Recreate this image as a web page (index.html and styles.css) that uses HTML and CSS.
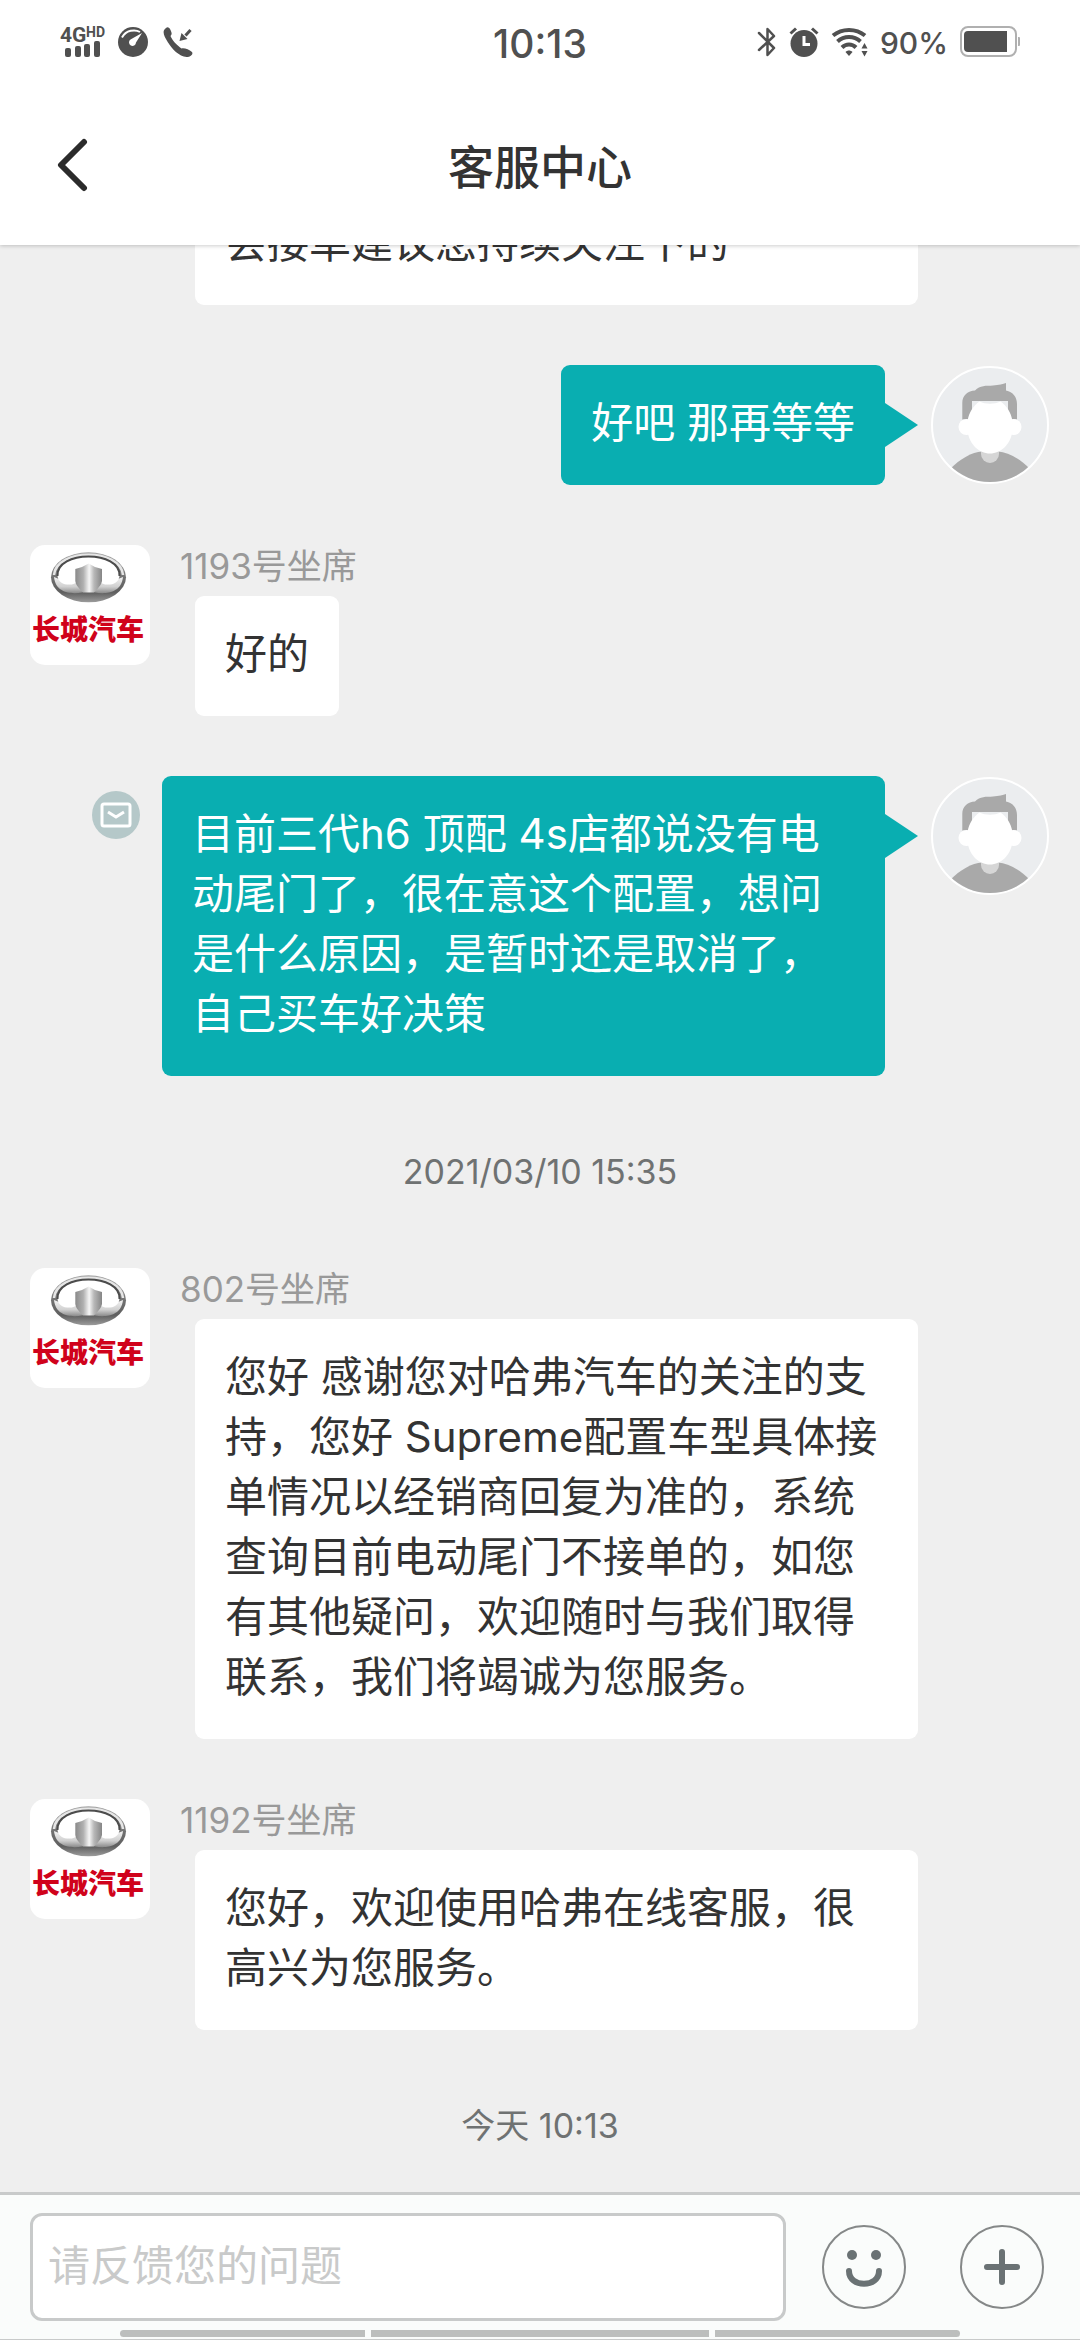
FILE: index.html
```html
<!DOCTYPE html>
<html lang="zh-CN">
<head>
<meta charset="utf-8">
<meta name="viewport" content="width=device-width, initial-scale=1">
<title>客服中心</title>
<link rel="stylesheet" href="styles.css">
</head>
<body>
<svg class="sprite" aria-hidden="true">
  <defs>
    <linearGradient id="ring" x1="0" y1="0" x2="0" y2="1">
      <stop offset="0" stop-color="#a5a5a5"/>
      <stop offset=".3" stop-color="#8a8a8a"/>
      <stop offset=".55" stop-color="#6d6d6d"/>
      <stop offset=".8" stop-color="#5f5f5f"/>
      <stop offset="1" stop-color="#9c9c9c"/>
    </linearGradient>
    <linearGradient id="swoosh" x1="0" y1="0" x2="0" y2="1">
      <stop offset="0" stop-color="#f2f2f2"/>
      <stop offset=".6" stop-color="#d0d0d0"/>
      <stop offset="1" stop-color="#8a8a8a"/>
    </linearGradient>
    <linearGradient id="tower" x1="0" y1="0" x2="1" y2="0">
      <stop offset="0" stop-color="#8a8a8a"/>
      <stop offset=".3" stop-color="#b0b0b0"/>
      <stop offset=".52" stop-color="#f6f6f6"/>
      <stop offset=".7" stop-color="#b8b8b8"/>
      <stop offset="1" stop-color="#858585"/>
    </linearGradient>
    <clipPath id="disc"><circle cx="60" cy="60" r="57"/></clipPath>
  </defs>
  <symbol id="user" viewBox="0 0 120 120">
    <circle cx="60" cy="60" r="58" fill="#ebedef" stroke="#fff" stroke-width="2"/>
    <g clip-path="url(#disc)">
      <path d="M20 104C30 94 42 87 52 86.500H68C78 87 90 94 100 104V120H20Z" fill="#a9a9a9"/>
    </g>
    <path d="M51 84H69V89a9 9 0 0 1-18 0Z" fill="#d6d6d6"/>
    <path d="M32.300 54.500V38C32.300 30 38 26 45 25.500C50 20 56 21 63 20.500C69 20 73 19 76 18V25.500C83 27 87 32 87 39V54.500H78V36H42V54.500Z" fill="#a9a9a9"/>
    <circle cx="36.500" cy="62" r="8" fill="#fff"/>
    <circle cx="83.500" cy="62" r="8" fill="#fff"/>
    <path d="M49.500 36.500C56 39.500 64 39.500 70.500 36.500C77 41 81 48 82.300 55V66C81 79 71 88.500 60 88.500S39 79 37.700 66V55C39 48 43 41 49.500 36.500Z" fill="#fff"/>
  </symbol>
  <symbol id="brand" viewBox="0 0 120 120">
    <ellipse cx="58.500" cy="32.300" rx="37.500" ry="25" fill="url(#ring)"/>
    <path d="M24 30C26 3 91 3 93 30" fill="none" stroke="#e6e6e6" stroke-width="2.500"/>
    <path d="M24 32C26 52 50 49 57 46H60C67 49 91 52 93 32L88 34H29Z" fill="url(#swoosh)"/>
    <path d="M27.500 29C29 6 88 6 89.500 29C90 35 86 39 80 39.500C75 40 72 39 69 36H48C45 39 42 40 37 39.500C31 39 27 35 27.500 29Z" fill="#fff"/>
    <path d="M27.500 31C26 5 91 5 89.500 31" fill="none" stroke="#4c4c4c" stroke-width="2"/>
    <path d="M45.300 24L52 22L58.700 18.500L65 22L72 24V36C71 41 67 44 64 47.500H53C50 44 46 41 45.300 36Z" fill="url(#tower)"/>
    <text x="58" y="95" text-anchor="middle" class="brand-name">长城汽车</text>
  </symbol>
</svg>

<div class="screen">
  <header class="top">
    <div class="status">
      <div class="status-left">
        <svg width="50" height="42" viewBox="0 -6 50 42" fill="currentColor" role="img" aria-label="4G HD">
          <text x="0" y="15" class="net">4G</text>
          <text x="26" y="10" class="net-hd">HD</text>
          <rect x="5" y="21" width="6" height="9" rx="2"/>
          <rect x="15" y="19" width="6" height="11" rx="2"/>
          <rect x="24" y="17" width="6" height="13" rx="2"/>
          <rect x="34" y="14" width="6" height="16" rx="2"/>
        </svg>
        <svg class="gap-a" width="30" height="30" viewBox="0 0 30 30" aria-hidden="true">
          <circle cx="15" cy="15" r="15" fill="currentColor"/>
          <path d="M4 10.500C8 3 17 2 22 5" fill="none" stroke="#fff" stroke-width="2"/>
          <path d="M24 6L18 15.500A3.500 3.500 0 1 1 12.500 12.500Z" fill="#fff"/>
        </svg>
        <svg class="gap-b" width="30" height="30" viewBox="0 0 30 30" fill="currentColor" aria-hidden="true">
          <path d="M3 1C4.500-.5 6.500.5 7.500 3S9.500 7 7.500 9C9 13 14 18.500 18.500 21.500C21 20.500 26 22.500 29 25C30.500 27 28 29.500 25 30C17 30.500 9 22 5 15.500C1 9-1.500 4 3 1Z"/>
          <path d="M27.500 3L22.500 8.500" stroke="currentColor" stroke-width="3"/>
          <path d="M16.500 14L18.500 6L24.500 12Z"/>
        </svg>
      </div>
      <time class="clock">10:13</time>
      <div class="status-right">
        <svg width="20" height="30" viewBox="0 0 20 30" fill="none" stroke="currentColor" stroke-width="2.500" stroke-linejoin="round" stroke-linecap="round" aria-hidden="true">
          <path d="M2 6L17 21L10.500 28V2L17 9L2 23"/>
        </svg>
        <svg width="30" height="30" viewBox="0 0 30 30" fill="currentColor" aria-hidden="true">
          <circle cx="15" cy="16.500" r="13.500"/>
          <path d="M1.500 6.500L7 1.500M28.500 6.500L23 1.500" stroke="currentColor" stroke-width="3"/>
          <path d="M15 9V17.500H21" fill="none" stroke="#fff" stroke-width="3"/>
        </svg>
        <svg width="37" height="30" viewBox="0 0 37 30" aria-hidden="true">
          <g fill="none" stroke="currentColor" stroke-width="4">
            <path d="M2 8.500C11 1 25 1 34 8.500"/>
            <path d="M6.500 14.500C13 8.500 23 8.500 29.500 14.500"/>
            <path d="M11 20.500C15 16.500 21 16.500 25 20.500"/>
          </g>
          <path d="M14.500 25C16.500 23 19.500 23 21.500 25L18 29Z" fill="currentColor"/>
          <path d="M30.500 21.500L33.500 16L36.500 21.500ZM30.500 24L33.500 29.500L36.500 24Z" fill="currentColor"/>
        </svg>
        <span class="percent">90%</span>
        <svg width="60" height="32" viewBox="0 0 60 32" aria-hidden="true">
          <rect x="1" y="1" width="55" height="29" rx="7" fill="none" stroke="#b0b0b0" stroke-width="2"/>
          <path d="M8 5H47V26H8A4 4 0 0 1 4 22V9A4 4 0 0 1 8 5Z" fill="currentColor"/>
          <path d="M58 11h1q1 0 1 1v7q0 1-1 1h-1Z" fill="#b0b0b0"/>
        </svg>
      </div>
    </div>
    <div class="appbar">
      <button class="back" type="button" aria-label="返回">
        <svg width="32" height="54" viewBox="0 0 32 54" fill="none" stroke="#2b2b2b" stroke-width="6" stroke-linecap="round" stroke-linejoin="round" aria-hidden="true"><path d="M27 4L4 27L27 50"/></svg>
      </button>
      <h1 class="title">客服中心</h1>
    </div>
  </header>

  <main class="chat">
    <div class="row row-continued">
      <p class="bubble bubble-full">会接单建议您持续关注下的</p>
    </div>

    <div class="row row-user">
      <p class="bubble">好吧 那再等等</p>
      <svg class="avatar" role="img" aria-label="我"><use href="#user"/></svg>
    </div>

    <div class="row">
      <svg class="avatar avatar-agent" role="img" aria-label="长城汽车"><use href="#brand"/></svg>
      <div class="body">
        <span class="name">1193号坐席</span>
        <p class="bubble">好的</p>
      </div>
    </div>

    <div class="row row-user">
      <svg class="mark" viewBox="0 0 48 48" aria-hidden="true">
        <circle cx="24" cy="24" r="24" fill="#b5c8c9"/>
        <rect x="10" y="13" width="28" height="22" rx="2" fill="none" stroke="#fff" stroke-width="3"/>
        <path d="M16 21L24 26L32 21" fill="none" stroke="#fff" stroke-width="3"/>
      </svg>
      <p class="bubble">目前三代h6 顶配 4s店都说没有电动尾门了，很在意这个配置，想问是什么原因，是暂时还是取消了，自己买车好决策</p>
      <svg class="avatar" role="img" aria-label="我"><use href="#user"/></svg>
    </div>

    <time class="stamp">2021/03/10 15:35</time>

    <div class="row">
      <svg class="avatar avatar-agent" role="img" aria-label="长城汽车"><use href="#brand"/></svg>
      <div class="body">
        <span class="name">802号坐席</span>
        <p class="bubble">您好 感谢您对哈弗汽车的关注的支持，您好 Supreme配置车型具体接单情况以经销商回复为准的，系统查询目前电动尾门不接单的，如您有其他疑问，欢迎随时与我们取得联系，我们将竭诚为您服务。</p>
      </div>
    </div>

    <div class="row">
      <svg class="avatar avatar-agent" role="img" aria-label="长城汽车"><use href="#brand"/></svg>
      <div class="body">
        <span class="name">1192号坐席</span>
        <p class="bubble">您好，欢迎使用哈弗在线客服，很高兴为您服务。</p>
      </div>
    </div>

    <time class="stamp">今天 10:13</time>
  </main>

  <footer class="composer">
    <form class="form">
      <input class="field" type="text" placeholder="请反馈您的问题" aria-label="请反馈您的问题">
      <button class="tool" type="button" aria-label="表情">
        <svg viewBox="0 0 84 84" aria-hidden="true">
          <circle cx="42" cy="42" r="41" fill="none" stroke="#858888" stroke-width="2"/>
          <circle cx="30" cy="30" r="5" fill="#6a7274"/>
          <circle cx="54" cy="30" r="5" fill="#6a7274"/>
          <path d="M27 46C27 63 57 63 57 46" fill="none" stroke="#6a7274" stroke-width="6" stroke-linecap="round"/>
        </svg>
      </button>
      <button class="tool" type="button" aria-label="更多">
        <svg viewBox="0 0 84 84" aria-hidden="true">
          <circle cx="42" cy="42" r="41" fill="none" stroke="#858888" stroke-width="2"/>
          <path d="M42 27V57M27 42H57" fill="none" stroke="#6a7274" stroke-width="6" stroke-linecap="round"/>
        </svg>
      </button>
    </form>
    <div class="gesture" aria-hidden="true"><span></span><span></span><span></span></div>
  </footer>
</div>
</body>
</html>
```

FILE: styles.css
```css
* {
  box-sizing: border-box;
}

body {
  margin: 0;
  background: #efefef;
  color: #333;
  font-family: Inter, "Noto Sans CJK SC", sans-serif;
}

button {
  padding: 0;
  border: 0;
  background: none;
}

svg {
  display: block;
  flex: none;
}

.sprite {
  position: absolute;
  width: 0;
  height: 0;
}

.brand-name {
  font: 900 28px "Noto Sans CJK SC", sans-serif;
  fill: #d0021b;
}

.screen {
  display: flex;
  flex-direction: column;
  height: 100vh;
}

/* Header */
.top {
  position: relative;
  z-index: 1;
  background: #fff;
  box-shadow: 0 1px 4px rgba(0, 0, 0, 0.2);
}

.status {
  display: grid;
  grid-template-columns: 1fr auto 1fr;
  align-items: center;
  height: 84px;
  padding: 0 60px;
  color: #505050;
}

.status-left,
.status-right {
  display: flex;
  align-items: center;
}

.status-right {
  justify-content: flex-end;
  gap: 12px;
}

.gap-a {
  margin-left: 8px;
}

.gap-b {
  margin-left: 15px;
}

.net {
  font: 700 21px Roboto, sans-serif;
}

.net-hd {
  font: 700 14px Roboto, sans-serif;
}

.clock {
  padding-top: 4px;
  font-size: 39px;
  font-weight: 500;
  line-height: 48px;
}

.percent {
  padding-top: 2px;
  font-size: 30px;
  font-weight: 500;
  line-height: 36px;
}

.appbar {
  display: grid;
  grid-template-columns: 1fr auto 1fr;
  align-items: center;
  height: 161px;
  padding: 0 57px;
}

.back {
  justify-self: start;
}

.title {
  margin: 0;
  padding-top: 4px;
  font-size: 46px;
  font-weight: 500;
  line-height: 60px;
}

/* Conversation */
.chat {
  display: flex;
  flex: 1;
  flex-direction: column;
  justify-content: flex-end;
  gap: 60px;
  min-height: 0;
  padding: 0 30px 30px;
  overflow: hidden;
}

.row {
  display: flex;
  flex: none;
  align-items: flex-start;
  padding-right: 132px;
}

.row-continued {
  padding-left: 165px;
}

.row-user {
  justify-content: flex-end;
  padding-right: 0;
}

.avatar {
  width: 120px;
  height: 120px;
}

.avatar-agent {
  border-radius: 15px;
  background: #fff;
}

.body {
  display: flex;
  flex: 1;
  flex-direction: column;
  align-items: flex-start;
  min-width: 0;
  padding-left: 30px;
}

.name {
  height: 51px;
  color: #999;
  font-size: 35px;
  line-height: 42px;
}

.bubble {
  position: relative;
  margin: 0 0 0 15px;
  padding: 28px 30px 32px;
  border-radius: 9px;
  background: #fff;
  font-size: 42px;
  line-height: 60px;
}

.bubble-full {
  flex: 1;
  margin-left: 0;
}

.row-user .bubble {
  max-width: 723px;
  margin: 0 45px 0 0;
  background: #09aeb1;
  color: #fff;
}

.row-user .bubble::after {
  content: "";
  position: absolute;
  top: 38px;
  left: 100%;
  border-top: 22px solid transparent;
  border-bottom: 22px solid transparent;
  border-left: 33px solid #09aeb1;
}

.mark {
  width: 48px;
  height: 48px;
  margin: 15px 22px 0 0;
}

.stamp {
  flex: none;
  color: #6f7272;
  font-size: 34px;
  line-height: 72px;
  text-align: center;
}

/* Composer */
.composer {
  border-top: 3px solid #c8caca;
  border-bottom: 1px solid #c8caca;
  background: #fafcfb;
}

.form {
  display: flex;
  align-items: center;
  margin: 0;
  padding: 18px 36px 0 30px;
}

.field {
  flex: 1;
  min-width: 0;
  height: 108px;
  padding: 0 15px 4px;
  border: 3px solid #c8caca;
  border-radius: 12px;
  background: #fff;
  color: #333;
  font: inherit;
  font-size: 42px;
}

.field::placeholder {
  color: #c9caca;
  opacity: 1;
}

.tool {
  width: 84px;
  height: 84px;
  margin-left: 36px;
}

.tool + .tool {
  margin-left: 54px;
}

.gesture {
  display: grid;
  grid-template-columns: 245fr 338fr 245fr;
  gap: 6px;
  padding: 9px 120px 2px;
}

.gesture span {
  height: 7px;
  background: #bcbebd;
}

.gesture span:first-child {
  border-radius: 4px 0 0 4px;
}

.gesture span:last-child {
  border-radius: 0 4px 4px 0;
}
```
